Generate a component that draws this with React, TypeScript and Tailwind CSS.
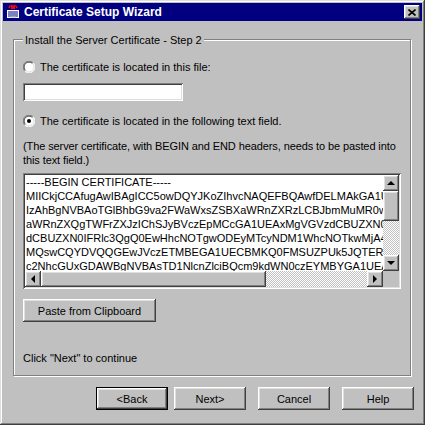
import React from "react";

// --- bevels (Windows classic) ---
const RAISED =
  "shadow-[inset_-1px_-1px_#404040,inset_1px_1px_#ffffff,inset_-2px_-2px_#808080,inset_2px_2px_#dfdfdf]";
const SUNKEN =
  "shadow-[inset_1px_1px_#808080,inset_-1px_-1px_#ffffff,inset_2px_2px_#404040,inset_-2px_-2px_#dfdfdf]";
const DITHER =
  "bg-[repeating-conic-gradient(#ffffff_0_25%,#c0c0c0_0_50%)] bg-[length:2px_2px]";

const CERT_LINES = [
  "-----BEGIN CERTIFICATE-----",
  "MIICkjCCAfugAwIBAgICC5owDQYJKoZIhvcNAQEFBQAwfDELMAkGA1UEBhMCVVMxEzAR",
  "IzAhBgNVBAoTGlBhbG9va2FWaWxsZSBXaWRnZXRzLCBJbmMuMR0wGwYDVQQLExRX",
  "aWRnZXQgTWFrZXJzIChSJyBVczEpMCcGA1UEAxMgVGVzdCBUZXN0IFRlc3QgQ0E",
  "dCBUZXN0IFRlc3QgQ0EwHhcNOTgwODEyMTcyNDM1WhcNOTkwMjA4MTcyNDM1WjCB",
  "MQswCQYDVQQGEwJVczETMBEGA1UECBMKQ0FMSUZPUk5JQTERMA8GA1UEBxMITW91",
  "c2NhcGUxGDAWBgNVBAsTD1NlcnZlciBQcm9kdWN0czEYMBYGA1UEAxMPdGVzdC5uZX",
];

function Radio({ checked }: { checked?: boolean }) {
  return (
    <svg width="12" height="12" viewBox="0 0 12 12" className="shrink-0">
      <circle cx="6" cy="6" r="5.5" fill="#ffffff" />
      <path d="M10.2 1.8 A5.5 5.5 0 0 0 1.8 10.2" fill="none" stroke="#808080" strokeWidth="1" />
      <path d="M1.8 10.2 A5.5 5.5 0 0 0 10.2 1.8" fill="none" stroke="#ffffff" strokeWidth="1" />
      <path d="M9.5 2.5 A4.5 4.5 0 0 0 2.5 9.5" fill="none" stroke="#404040" strokeWidth="1" />
      <path d="M2.5 9.5 A4.5 4.5 0 0 0 9.5 2.5" fill="none" stroke="#dfdfdf" strokeWidth="1" />
      {checked && <circle cx="6" cy="6" r="2" fill="#000000" />}
    </svg>
  );
}

function Arrow({ dir }: { dir: "up" | "down" | "left" | "right" }) {
  const pts = {
    up: "4,1 0,5 8,5",
    down: "0,1 8,1 4,5",
    left: "5,0 5,8 1,4",
    right: "1,0 1,8 5,4",
  }[dir];
  const vertical = dir === "up" || dir === "down";
  return (
    <svg width={vertical ? 8 : 6} height={vertical ? 6 : 8} viewBox={vertical ? "0 0 8 6" : "0 0 6 8"}>
      <polygon points={pts} fill="#000000" />
    </svg>
  );
}

function ScrollBtn({ dir }: { dir: "up" | "down" | "left" | "right" }) {
  return (
    <div className={`w-[16px] h-[16px] shrink-0 bg-[#c0c0c0] flex items-center justify-center ${RAISED}`}>
      <Arrow dir={dir} />
    </div>
  );
}

function Button({ label, width, isDefault }: { label: string; width: string; isDefault?: boolean }) {
  if (isDefault) {
    return (
      <div className={`${width} h-[23px] border border-black bg-[#c0c0c0]`}>
        <div className={`h-full flex items-center justify-center ${RAISED}`}>{label}</div>
      </div>
    );
  }
  return (
    <div className={`${width} h-[23px] bg-[#c0c0c0] flex items-center justify-center ${RAISED}`}>{label}</div>
  );
}

function TitleIcon() {
  return (
    <svg width="16" height="16" viewBox="0 0 16 16">
      <rect x="1.5" y="5.5" width="13" height="9" fill="#ffffff" stroke="#000080" />
      <path d="M3 8h10M3 10h10M3 12h10" stroke="#000080" strokeWidth="1" />
      <path d="M4 4 C5 1 7 1 8 3 C9 1 11 1 12 4" fill="none" stroke="#ff0000" strokeWidth="1.5" />
      <rect x="6" y="2" width="4" height="3" fill="#ff0000" />
      <path d="M5 13h6" stroke="#c0c0c0" strokeWidth="1" />
    </svg>
  );
}

export default function App() {
  return (
    <div
      className="w-[425px] h-[425px] bg-[#c0c0c0] p-[3px] flex flex-col text-[11px] text-black leading-[14px] shadow-[inset_-1px_-1px_#404040,inset_1px_1px_#dfdfdf,inset_-2px_-2px_#808080,inset_2px_2px_#ffffff]"
      style={{ fontFamily: '"Liberation Sans", Arial, sans-serif' }}
    >
      {/* barra de título */}
      <div className="h-[18px] bg-[#000080] flex items-center pl-[2px] pr-[2px] gap-[3px] shrink-0">
        <TitleIcon />
        <span className="text-white font-bold text-[12px]">Certificate Setup Wizard</span>
        <div className={`ml-auto w-[16px] h-[14px] bg-[#c0c0c0] flex items-center justify-center ${RAISED}`}>
          <svg width="8" height="7" viewBox="0 0 8 7">
            <path d="M0.5 0.5 L7.5 6.5 M7.5 0.5 L0.5 6.5" stroke="#000" strokeWidth="1.6" />
          </svg>
        </div>
      </div>

      {/* group box */}
      <div className="relative mt-[18px] ml-[10px] w-[398px] h-[337px] border border-[#808080] shadow-[inset_1px_1px_#ffffff,1px_1px_#ffffff] px-[9px] flex flex-col">
        <span className="absolute left-[9px] -top-[7px] bg-[#c0c0c0] px-[2px]">
          Install the Server Certificate - Step 2
        </span>

        <div className="mt-[20px] flex items-center gap-[5px] h-[13px]">
          <Radio />
          <span>The certificate is located in this file:</span>
        </div>

        <div className={`mt-[10px] w-[160px] h-[18px] bg-white ${SUNKEN}`} />

        <div className="mt-[13px] flex items-center gap-[5px] h-[13px]">
          <Radio checked />
          <span>The certificate is located in the following text field.</span>
        </div>

        <p className="mt-[12px] w-[386px] tracking-[-0.1px]">
          (The server certificate, with BEGIN and END headers, needs to be pasted into this text field.)
        </p>

        {/* área de texto */}
        <div className={`mt-[6px] w-[378px] h-[116px] bg-white p-[2px] ${SUNKEN}`}>
          <div className="flex h-[96px]">
            <div className="flex-1 overflow-hidden whitespace-nowrap pl-[1px]">
              {CERT_LINES.map((line, i) => (
                <div key={i}>{line}</div>
              ))}
            </div>
            <div className="w-[16px] flex flex-col">
              <ScrollBtn dir="up" />
              <div className={`h-[30px] bg-[#c0c0c0] ${RAISED}`} />
              <div className={`flex-1 ${DITHER}`} />
              <ScrollBtn dir="down" />
            </div>
          </div>
          <div className="flex h-[16px]">
            <ScrollBtn dir="left" />
            <div className={`w-[225px] bg-[#c0c0c0] ${RAISED}`} />
            <div className={`flex-1 ${DITHER}`} />
            <ScrollBtn dir="right" />
            <div className="w-[16px] bg-[#c0c0c0]" />
          </div>
        </div>

        <div className="mt-[10px]">
          <Button label="Paste from Clipboard" width="w-[133px]" />
        </div>

        <p className="mt-[29px]">Click "Next" to continue</p>
      </div>

      {/* botões */}
      <div className="mt-[11px] flex pl-[93px]">
        <Button label="<Back" width="w-[72px]" isDefault />
        <div className="ml-[6px]">
          <Button label="Next>" width="w-[72px]" />
        </div>
        <div className="ml-[12px]">
          <Button label="Cancel" width="w-[72px]" />
        </div>
        <div className="ml-[12px]">
          <Button label="Help" width="w-[72px]" />
        </div>
      </div>
    </div>
  );
}
